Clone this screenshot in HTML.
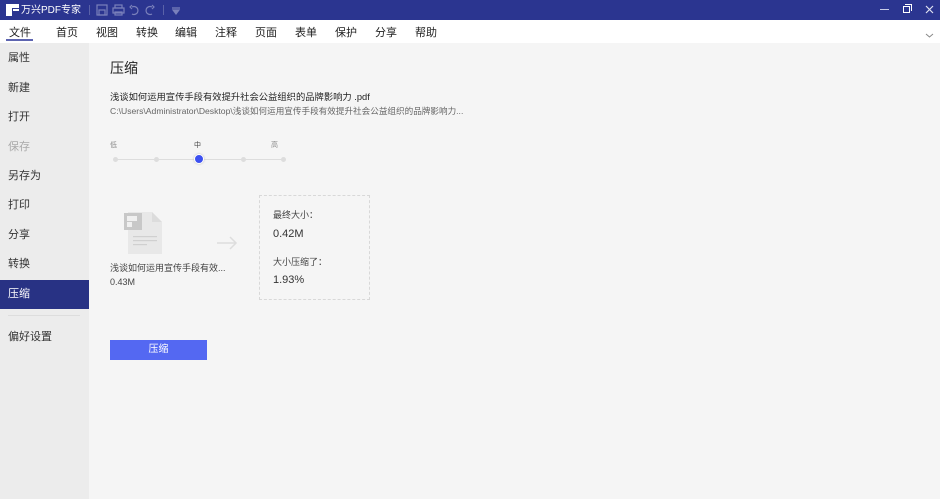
<!DOCTYPE html>
<html><head><meta charset="utf-8"><style>
*{margin:0;padding:0;box-sizing:border-box;line-height:1}
body{width:940px;height:499px;overflow:hidden;background:#f5f5f5;font-family:"Liberation Sans","Noto Sans CJK SC",sans-serif;color:#333;position:relative}
.a{position:absolute}
.tb{left:0;top:0;width:940px;height:20px;background:#2b3590}
.mb{left:0;top:20px;width:940px;height:23px;background:#fff}
.mb span{position:absolute;top:8px;font-size:11px;color:#222}
.sb{left:0;top:43px;width:89px;height:456px;background:#ececec}
.sb div{position:absolute;left:8px;font-size:11px;color:#333}
</style></head><body>
<div class="a tb">
 <svg class="a" style="left:6px;top:4px" width="14" height="12"><rect x="0" y="0" width="13" height="4" fill="#fff"/><rect x="0" y="4" width="6" height="8" fill="#fff"/><rect x="7" y="5" width="6" height="2" fill="#fff"/></svg>
 <span class="a" style="left:21px;top:6px;font-size:10px;color:#fff">万兴PDF专家</span>
 <div class="a" style="left:89px;top:5px;width:1px;height:10px;background:#5a62a8"></div>
 <svg class="a" style="left:96px;top:4px" width="90" height="12" fill="none" stroke="#7a80bb" stroke-width="1.2">
  <rect x="1" y="1" width="10" height="10"/><rect x="3" y="6" width="6" height="5"/>
  <rect x="17" y="4" width="11" height="5"/><rect x="19" y="1" width="7" height="3"/><rect x="19" y="8" width="7" height="3"/>
  <path d="M36 3 a4 4 0 1 1 0 7"/><path d="M36 1 L34 3 L36 5"/>
  <path d="M56 3 a4 4 0 1 0 0 7"/><path d="M56 1 L58 3 L56 5"/>
  <path d="M76 4 L84 4 M77 6 L83 6 L80 10 Z" fill="#7a80bb"/>
 </svg>
 <div class="a" style="left:163px;top:5px;width:1px;height:10px;background:#5a62a8"></div>
 <div class="a" style="left:880px;top:9px;width:9px;height:1px;background:#c8cbe6"></div>
 <div class="a" style="left:903px;top:6px;width:7px;height:7px;border:1.3px solid #fff"></div>
 <div class="a" style="left:905px;top:4px;width:7px;height:7px;border-top:1px solid #fff;border-right:1px solid #fff"></div>
 <svg class="a" style="left:925px;top:5px" width="9" height="9"><path d="M1 1 L8 8 M8 1 L1 8" stroke="#dfe1f0" stroke-width="1.2"/></svg>
</div>
<div class="a mb">
 <span style="left:9px">文件</span><div class="a" style="left:6px;top:19px;width:27px;height:2px;background:#5d64b0"></div>
 <span style="left:56px">首页</span><span style="left:96px">视图</span><span style="left:136px">转换</span><span style="left:175px">编辑</span><span style="left:215px">注释</span><span style="left:255px">页面</span><span style="left:295px">表单</span><span style="left:335px">保护</span><span style="left:375px">分享</span><span style="left:415px">帮助</span>
 <svg class="a" style="left:925px;top:13px" width="9" height="5"><path d="M1 1 L4.5 4 L8 1" stroke="#888" fill="none"/></svg>
</div>
<div class="a sb">
 <div style="top:10px">属性</div><div style="top:40px">新建</div><div style="top:69px">打开</div><div style="top:99px;color:#aaa">保存</div><div style="top:128px">另存为</div><div style="top:157px">打印</div><div style="top:187px">分享</div><div style="top:216px">转换</div>
 <div style="left:0;top:237px;width:89px;height:29px;background:#283284"></div>
 <div style="top:246px;color:#fff">压缩</div>
 <div style="top:272px;width:72px;height:1px;background:#ddd"></div>
 <div style="top:289px">偏好设置</div>
</div>
<div class="a" style="left:110px;top:61px;font-size:14px;color:#222">压缩</div>
<div class="a" style="left:110px;top:93px;font-size:9.3px;color:#222">浅谈如何运用宣传手段有效提升社会公益组织的品牌影响力 .pdf</div>
<div class="a" style="left:110px;top:107px;font-size:8.6px;color:#666">C:\Users\Administrator\Desktop\浅谈如何运用宣传手段有效提升社会公益组织的品牌影响力...</div>
<div class="a" style="left:110px;top:142px;font-size:7px;color:#888">低</div>
<div class="a" style="left:194px;top:142px;font-size:7px;color:#444">中</div>
<div class="a" style="left:271px;top:142px;font-size:7px;color:#888">高</div>
<div class="a" style="left:114px;top:159px;width:170px;height:1px;background:#ddd"></div>
<div class="a" style="left:113px;top:157px;width:5px;height:5px;border-radius:50%;background:#ddd"></div>
<div class="a" style="left:154px;top:157px;width:5px;height:5px;border-radius:50%;background:#ddd"></div>
<div class="a" style="left:241px;top:157px;width:5px;height:5px;border-radius:50%;background:#ddd"></div>
<div class="a" style="left:281px;top:157px;width:5px;height:5px;border-radius:50%;background:#ddd"></div>
<div class="a" style="left:194px;top:154px;width:10px;height:10px;border-radius:50%;background:#3c50f0;border:1.5px solid #fff;box-shadow:0 0 2px #bbb"></div>
<svg class="a" style="left:124px;top:210px" width="40" height="45">
 <path d="M4 2 H28 L38 12 V44 H4 Z" fill="#e8e8e8"/><path d="M28 2 L38 12 H28 Z" fill="#dcdcdc"/>
 <rect x="0" y="3" width="18" height="17" fill="#c8c8c8"/><rect x="3" y="6" width="10" height="5" fill="#f0f0f0"/><rect x="3" y="12" width="5" height="5" fill="#f0f0f0"/>
 <rect x="9" y="26" width="24" height="1.2" fill="#d0d0d0"/><rect x="9" y="30" width="24" height="1.2" fill="#d0d0d0"/><rect x="9" y="34" width="14" height="1.2" fill="#d0d0d0"/>
</svg>
<svg class="a" style="left:216px;top:236px" width="22" height="14"><path d="M1 7 H20 M14 1 L20 7 L14 13" stroke="#ddd" stroke-width="1.5" fill="none"/></svg>
<div class="a" style="left:110px;top:264px;font-size:9px;color:#444">浅谈如何运用宣传手段有效...</div>
<div class="a" style="left:110px;top:278px;font-size:9px;color:#444">0.43M</div>
<div class="a" style="left:259px;top:195px;width:111px;height:105px;border:1px dashed #d8d8d8"></div>
<div class="a" style="left:273px;top:211px;font-size:9px;color:#444">最终大小：</div>
<div class="a" style="left:273px;top:229px;font-size:11px;color:#333">0.42M</div>
<div class="a" style="left:273px;top:258px;font-size:9px;color:#444">大小压缩了：</div>
<div class="a" style="left:273px;top:275px;font-size:11px;color:#333">1.93%</div>
<div class="a" style="left:110px;top:340px;width:97px;height:20px;background:#5468f2;color:#fff;font-size:10px;text-align:center;line-height:20px">压缩</div>
</body></html>
